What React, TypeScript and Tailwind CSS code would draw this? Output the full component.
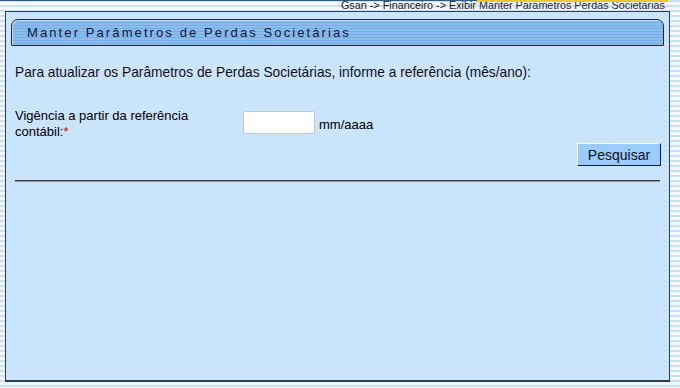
import React, { useState } from "react";

// Page: Manter Parâmetros de Perdas Societárias
export default function App() {
  const [referencia, setReferencia] = useState("");

  return (
    <div
      className="w-[680px] h-[388px] overflow-hidden bg-[repeating-linear-gradient(180deg,#c9e0f5_0px,#c9e0f5_2px,#f4f9fd_2px,#f4f9fd_5px)] text-black"
      style={{ fontFamily: '"Liberation Sans", Arial, sans-serif' }}
    >
      {/* BREADCRUMB */}
      <div className="relative h-[11px] flex justify-end pr-[15px]">
        <div className="absolute left-0 top-0 h-[1px] w-[477px] bg-[#34588a]" />
        <div className="absolute left-[477px] top-0 h-[2px] w-[191px] bg-[#ffc61a]" />
        <span className="text-[10.8px] leading-[11px] text-[#1a1a1a]">
          Gsan -&gt; Financeiro -&gt; Exibir{" "}
          <span className="text-[#2a1a3a]">Manter Parametros Perdas Societarias</span>
        </span>
      </div>

      {/* PANEL */}
      <div className="ml-[5px] w-[665px] h-[371px] border border-b-2 border-[#2b3d5c] bg-[#cae4fc] pt-[7px] px-[5px]">
        {/* TITLE BAR */}
        <div className="h-[27px] w-[653px] rounded-t-[7px] border border-[#1c2c48] bg-[repeating-linear-gradient(180deg,#8bbcee_0px,#8bbcee_2px,#79ade3_2px,#79ade3_3px)] flex items-center pl-[15px] shadow-[inset_1px_1px_0_#c3ddf7]">
          <span className="text-[13px] tracking-[2.1px] text-[#0e1a3a]">
            Manter Parâmetros de Perdas Societárias
          </span>
        </div>

        {/* CONTENT */}
        <div className="px-[4px] text-[13px] leading-[16px]">
          <p className="mt-[19px] text-[13.75px] text-[#111]">
            Para atualizar os Parâmetros de Perdas Societárias, informe a referência (mês/ano):
          </p>

          <div className="mt-[25px] flex items-start">
            <div className="w-[228px] pt-[2px]">
              Vigência a partir da referência
              <br />
              contábil:<span className="text-[#e00000]">*</span>
            </div>
            <input
              value={referencia}
              onChange={(e) => setReferencia(e.target.value)}
              maxLength={7}
              className="mt-[5px] w-[72px] h-[23px] bg-white border border-[#c4c8cc] rounded-[2px] outline-none px-1 text-[13px]"
            />
            <span className="ml-[4px] mt-[11px]">mm/aaaa</span>
          </div>

          <div className="flex justify-end mr-[-1px] mt-[3px]">
            <button className="w-[84px] h-[23px] bg-[#99ccff] border border-t-white border-l-white border-b-[#0a1a6a] border-r-[#0a1a6a] text-[14px] text-[#111]">
              Pesquisar
            </button>
          </div>

          <div className="mt-[14px] h-[1px] bg-[#3a3a3a] shadow-[0_1px_0_#8a96a4]" />
        </div>
      </div>
    </div>
  );
}
